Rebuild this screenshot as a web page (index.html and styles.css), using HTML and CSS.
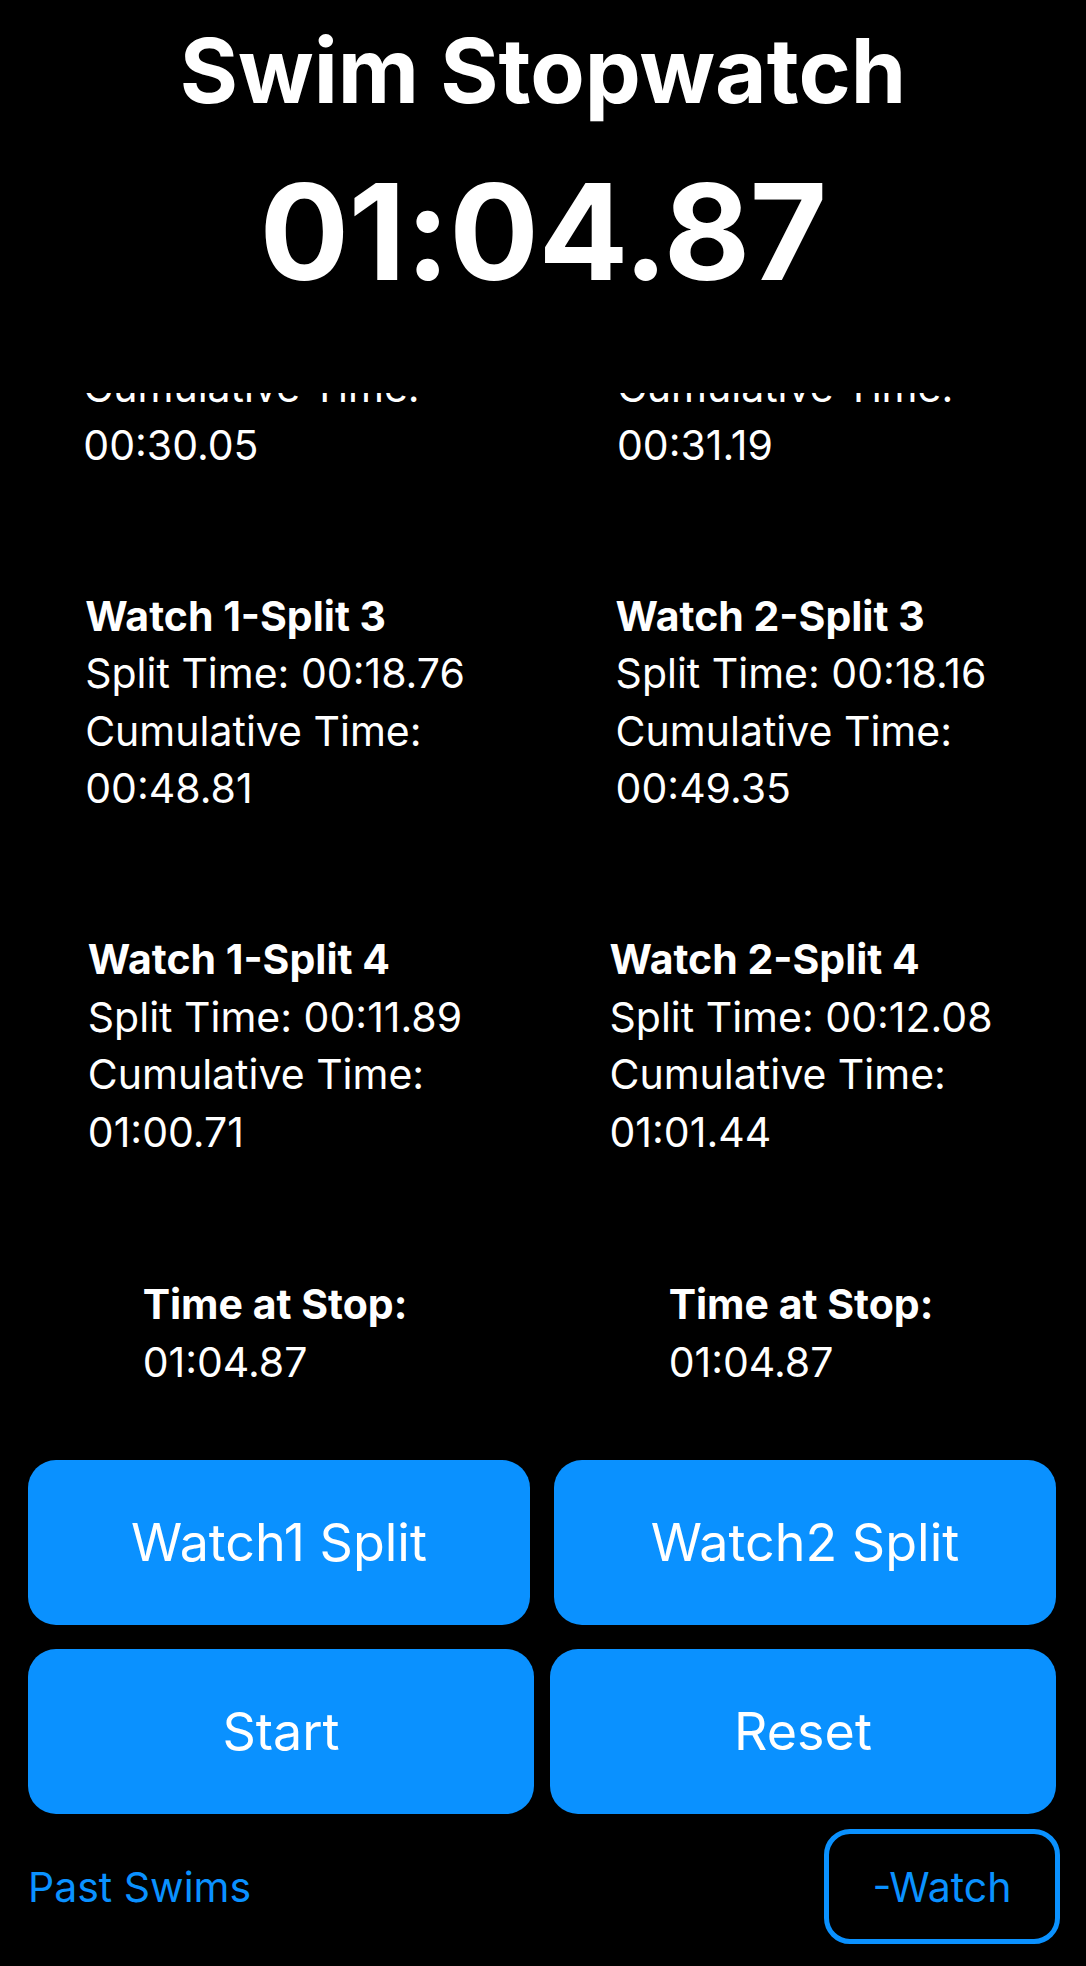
FILE: index.html
```html
<!DOCTYPE html>
<html lang="en">
<head>
    <meta charset="UTF-8">
    <meta name="viewport" content="width=device-width, initial-scale=1.0">
    <title>Swim Stopwatch</title>
    <link rel="stylesheet" href="styles.css">
</head>
<body>
    <div class="app">
        <header class="top">
            <h1 class="title">Swim Stopwatch</h1>
            <div class="clock">01:04.87</div>
        </header>

        <!-- split list, scrolled down a bit -->
        <div class="splits">
            <div class="splits-list">
                <div class="split-row">
                    <div class="split">
                        <div class="split-name">Watch 1-Split 2</div>
                        <div>Split Time: 00:15.43</div>
                        <div>Cumulative Time:</div>
                        <div>00:30.05</div>
                    </div>
                    <div class="split">
                        <div class="split-name">Watch 2-Split 2</div>
                        <div>Split Time: 00:16.17</div>
                        <div>Cumulative Time:</div>
                        <div>00:31.19</div>
                    </div>
                </div>
                <div class="split-row">
                    <div class="split">
                        <div class="split-name">Watch 1-Split 3</div>
                        <div>Split Time: 00:18.76</div>
                        <div>Cumulative Time:</div>
                        <div>00:48.81</div>
                    </div>
                    <div class="split">
                        <div class="split-name">Watch 2-Split 3</div>
                        <div>Split Time: 00:18.16</div>
                        <div>Cumulative Time:</div>
                        <div>00:49.35</div>
                    </div>
                </div>
                <div class="split-row">
                    <div class="split">
                        <div class="split-name">Watch 1-Split 4</div>
                        <div>Split Time: 00:11.89</div>
                        <div>Cumulative Time:</div>
                        <div>01:00.71</div>
                    </div>
                    <div class="split">
                        <div class="split-name">Watch 2-Split 4</div>
                        <div>Split Time: 00:12.08</div>
                        <div>Cumulative Time:</div>
                        <div>01:01.44</div>
                    </div>
                </div>
            </div>
        </div>

        <div class="stops">
            <div class="split">
                <div class="split-name">Time at Stop:</div>
                <div>01:04.87</div>
            </div>
            <div class="split">
                <div class="split-name">Time at Stop:</div>
                <div>01:04.87</div>
            </div>
        </div>

        <div class="controls">
            <div class="btn-row">
                <button class="btn">Watch1 Split</button>
                <button class="btn">Watch2 Split</button>
            </div>
            <div class="btn-row tight">
                <button class="btn">Start</button>
                <button class="btn">Reset</button>
            </div>
        </div>

        <div class="footer">
            <a class="past-link" href="#">Past Swims</a>
            <button class="outline-btn">-Watch</button>
        </div>
    </div>
</body>
</html>
```

FILE: styles.css
```css
body { margin: 0; background: #000; color: #fff; font-family: 'Inter', 'Noto Sans', sans-serif; }
.app { width: 1086px; min-height: 1966px; overflow: hidden; }

.top { text-align: center; padding-top: 21px; }
.title { margin: 0; font-size: 89px; line-height: 100px; font-weight: 700; }
.clock { margin-top: 41px; font-size: 133px; line-height: 140px; font-weight: 700; letter-spacing: -0.5px; }

.splits { height: 883px; margin-top: 91px; overflow: hidden; }
.splits-list { margin-top: -149px; display: flex; flex-direction: column; gap: 113.6px; }
.split-row, .stops { display: grid; grid-template-columns: 1fr 1fr; justify-items: center; padding: 0 22px 0 12px; }
.split { font-size: 41px; line-height: 57.5px; white-space: nowrap; }
.split-name { font-weight: 700; }

.controls { margin-top: 69px; padding: 0 30px 0 28px; display: flex; flex-direction: column; gap: 24px; }
.btn-row { display: flex; gap: 24px; }
.btn-row.tight { gap: 16px; }
.btn { flex: 1; height: 165px; border: none; border-radius: 28px; background: #0a91ff; color: #fff; font-family: inherit; font-size: 52px; cursor: pointer; }

.footer { margin-top: 15px; padding: 0 26px 0 28px; display: flex; justify-content: space-between; align-items: center; }
.past-link { color: #0a91ff; font-size: 41px; text-decoration: none; }
.outline-btn { width: 236px; height: 115px; border: 5px solid #0a91ff; border-radius: 26px; background: transparent; color: #0a91ff; font-family: inherit; font-size: 41px; }
```
